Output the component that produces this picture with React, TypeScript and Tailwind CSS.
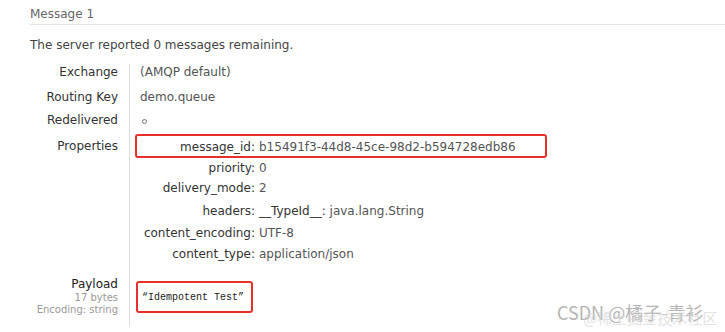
import React from "react";

const props = [
  { key: "message_id", value: "b15491f3-44d8-45ce-98d2-b594728edb86", h: "h-[21px]" },
  { key: "priority", value: "0", h: "h-[20px]" },
  { key: "delivery_mode", value: "2", h: "h-[23px]" },
  { key: "headers", value: "", h: "h-[22px]" },
  { key: "content_encoding", value: "UTF-8", h: "h-[21px]" },
  { key: "content_type", value: "application/json", h: "h-[21px]" },
];

const Row = ({ label, children, h }: { label: React.ReactNode; children: React.ReactNode; h: string }) => (
  <div className={`flex ${h}`}>
    <div className="w-[129px] shrink-0 pr-[11px] text-right text-[#333]">{label}</div>
    <div className="flex-1 border-l border-[#ddd] pl-[10px] text-[#555]">{children}</div>
  </div>
);

export default function App() {
  return (
    <div
      className="relative w-[725px] h-[332px] overflow-hidden bg-white text-[12px] leading-[16px]"
      style={{ fontFamily: '"DejaVu Sans", Verdana, sans-serif' }}
    >
      <div className="pl-[30px] pt-[6px]">
        <div className="border-b border-[#e3e3e3] pb-[2px] text-[#666]">Message 1</div>
        <p className="mt-[12px] text-[#444]">The server reported 0 messages remaining.</p>
      </div>

      <div className="mt-[11px]">
        <Row label="Exchange" h="h-[25px]">
          (AMQP default)
        </Row>
        <Row label="Routing Key" h="h-[23px]">
          demo.queue
        </Row>
        <Row label="Redelivered" h="h-[26px]">
          <span className="ml-[2px] mt-[2px] inline-block h-[5px] w-[5px] rounded-full border border-[#777] align-middle" />
        </Row>
        <Row label="Properties" h="h-[138px]">
          <div className="pt-[1px]">
            {props.map((p) => (
              <div key={p.key} className={`flex ${p.h}`}>
                <div className="w-[115px] shrink-0 text-right text-[#333]">{p.key}:</div>
                <div className="pl-[4px] text-[#555]">
                  {p.key === "headers" ? (
                    <span>
                      <span className="text-[#333]">__TypeId__:</span> java.lang.String
                    </span>
                  ) : (
                    p.value
                  )}
                </div>
              </div>
            ))}
          </div>
          <div className="absolute left-[135px] top-[134px] h-[24px] w-[412px] rounded-[3px] border-[2.5px] border-[#e8302a]" />
        </Row>
        <Row
          h="h-[50px]"
          label={
            <div>
              <div className="text-[#222]">Payload</div>
              <div className="text-[10px] leading-[12px] text-[#999]">17 bytes</div>
              <div className="text-[10px] leading-[11px] text-[#999]">Encoding: string</div>
            </div>
          }
        >
          <div
            className="ml-[2px] mt-[14px] text-[10px] text-[#222]"
            style={{ fontFamily: '"Liberation Mono", monospace' }}
          >
            “Idempotent Test”
          </div>
          <div className="absolute left-[136px] top-[281px] h-[32px] w-[117px] rounded-[3px] border-[2.5px] border-[#e8302a]" />
        </Row>
      </div>

      <div
        className="absolute left-[557px] top-[301px] text-[18px] leading-[22px] text-[#b5b5b5]"
        style={{ fontFamily: '"Noto Sans CJK SC", sans-serif' }}
      >
        CSDN @橘子-青衫
      </div>
      <div
        className="absolute left-[583px] top-[309px] text-[15px] leading-[18px] text-[#d8d8d8] opacity-70"
        style={{ fontFamily: '"Noto Sans CJK SC", sans-serif' }}
      >
        @稀土掘金技术社区
      </div>
    </div>
  );
}
